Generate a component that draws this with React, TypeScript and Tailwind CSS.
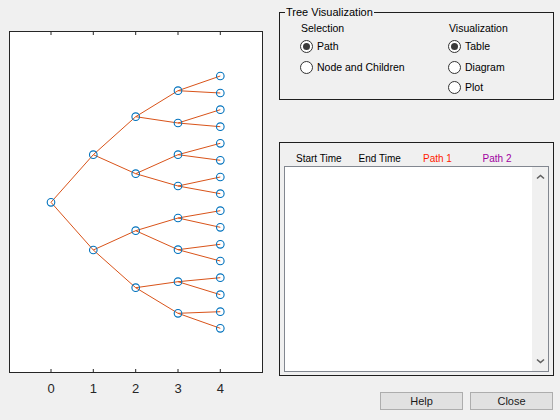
import React from 'react';

const xs = [51, 93.3, 135.7, 178, 220.3];
const levels: number[][] = [
  [202.3],
  [154.7, 250],
  [116.7, 173.7, 230.7, 287.7],
  [90.7, 123, 154.7, 186, 218, 249.7, 281.7, 313.3],
  [76, 93, 109.7, 126.7, 143.3, 160.3, 177, 193.7, 210.7, 227.3, 244.3, 261, 277.7, 294.7, 311.7, 328.3],
];

const TreePlot: React.FC = () => {
  const edges: { x1: number; y1: number; x2: number; y2: number }[] = [];
  levels.slice(0, 4).forEach((ys, k) => {
    ys.forEach((y, i) => {
      [2 * i, 2 * i + 1].forEach((c) => {
        edges.push({ x1: xs[k], y1: y, x2: xs[k + 1], y2: levels[k + 1][c] });
      });
    });
  });

  return (
    <svg width="275" height="420" className="shrink-0 block">
      <rect x="9.5" y="31.5" width="253" height="341" fill="#ffffff" stroke="#262626" strokeWidth="1" />
      {xs.map((x, i) => (
        <g key={i}>
          <line x1={x} y1="32" x2={x} y2="35" stroke="#262626" />
          <line x1={x} y1="372" x2={x} y2="369" stroke="#262626" />
          <text
            x={x}
            y="392.5"
            textAnchor="middle"
            fontSize="13"
            fill="#262626"
            fontFamily="'Liberation Sans', Arial, sans-serif"
          >
            {i}
          </text>
        </g>
      ))}
      {edges.map((e, i) => (
        <line key={i} x1={e.x1} y1={e.y1} x2={e.x2} y2={e.y2} stroke="#D95319" strokeWidth="1" />
      ))}
      {levels.map((ys, k) =>
        ys.map((y, i) => (
          <circle key={`${k}-${i}`} cx={xs[k]} cy={y} r="3.8" fill="none" stroke="#0072BD" strokeWidth="1.1" />
        ))
      )}
    </svg>
  );
};

const Radio: React.FC<{ label: string; checked?: boolean }> = ({ label, checked }) => (
  <div className="h-[20.5px] flex items-center gap-[4px] -ml-[1px]">
    <span className="w-[13px] h-[13px] rounded-full border border-[#333333] bg-white flex items-center justify-center shrink-0">
      {checked && <span className="w-[7px] h-[7px] rounded-full bg-[#3a3a3a]" />}
    </span>
    <span className="text-[10.5px] leading-[13px] text-black">{label}</span>
  </div>
);

const Chevron: React.FC<{ down?: boolean }> = ({ down }) => (
  <svg width="9" height="6" viewBox="0 0 9 6" className="block">
    <path
      d={down ? 'M1 1.5 L4.5 4.5 L8 1.5' : 'M1 4.5 L4.5 1.5 L8 4.5'}
      fill="none"
      stroke="#606060"
      strokeWidth="1.6"
    />
  </svg>
);

export default function App() {
  return (
    <div className="w-[560px] h-[420px] bg-[#f0f0f0] flex font-['Liberation_Sans',Arial,sans-serif] overflow-hidden">
      <TreePlot />

      <div className="w-[275px] ml-[4px] flex flex-col shrink-0">
        <fieldset className="mt-[6px] border border-[#1e1e1e] pl-[5px] pb-[1px]">
          <legend className="px-[1px] text-[11px] leading-[13px] text-black">Tree Visualization</legend>
          <div className="grid grid-cols-[148px_1fr] pl-[16px]">
            <div className="flex flex-col">
              <div className="mt-[2px] h-[14px] text-[10.5px] leading-[14px] text-black">Selection</div>
              <div className="mt-[1.5px]">
                <Radio label="Path" checked />
                <Radio label="Node and Children" />
              </div>
            </div>
            <div className="flex flex-col">
              <div className="mt-[2px] h-[14px] text-[10.5px] leading-[14px] text-black">Visualization</div>
              <div className="mt-[1.5px]">
                <Radio label="Table" checked />
                <Radio label="Diagram" />
                <Radio label="Plot" />
              </div>
            </div>
          </div>
        </fieldset>

        <div className="mt-[42px] h-[234px] border border-[#1e1e1e] pl-[4px] flex flex-col">
          <div className="h-[23px] flex items-end pb-[1.5px] pl-[12px] text-[10px] leading-[13px]">
            <span className="w-[62.6px] text-black">Start Time</span>
            <span className="w-[64.4px] text-black">End Time</span>
            <span className="w-[59.6px] text-[#ff1a00]">Path 1</span>
            <span className="text-[#a000a0]">Path 2</span>
          </div>
          <div className="w-[265px] h-[206px] border border-[#828790] bg-white flex justify-end">
            <div className="w-[16px] h-full bg-[#f0f0f0] flex flex-col items-center justify-between py-[7px]">
              <Chevron />
              <Chevron down />
            </div>
          </div>
        </div>

        <div className="mt-[16px] flex justify-end gap-[7px] pr-[1px]">
          <button className="w-[83px] h-[18px] bg-[#e1e1e1] border border-[#adadad] text-[11px] leading-[16px] font-normal text-[#1a1a1a]">
            Help
          </button>
          <button className="w-[83px] h-[18px] bg-[#e1e1e1] border border-[#adadad] text-[11px] leading-[16px] font-normal text-[#1a1a1a]">
            Close
          </button>
        </div>
      </div>
    </div>
  );
}
